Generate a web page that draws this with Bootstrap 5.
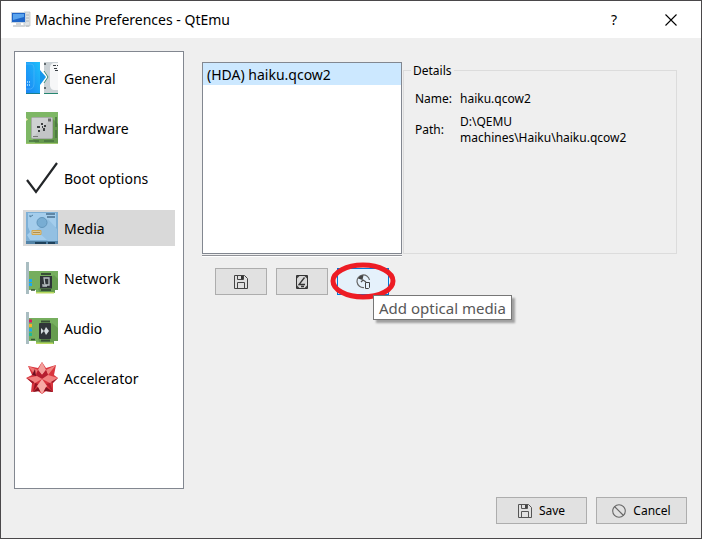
<!DOCTYPE html>
<html lang="en">
<head>
<meta charset="utf-8">
<meta name="viewport" content="width=device-width, initial-scale=1">
<title>Machine Preferences - QtEmu</title>
<link href="https://cdn.jsdelivr.net/npm/bootstrap@5.3.0/dist/css/bootstrap.min.css" rel="stylesheet">
<style>
body { font-family: "Noto Sans", sans-serif; font-size: 14px; line-height: 20px; color: #000; background: #f0f0f0; }
.dialog { border: 1px solid #4a484a; background: #efefef; }
.titlebar { height: 37px; padding-left: 10px; padding-right: 20px; }
.titlebar h1 { font-size: 14px; line-height: 20px; font-weight: 400; margin-left: 4px; }
.titlebar button { width: 20px; height: 20px; margin-left: 37px; color: #000; }
.workarea { padding: 13px 14px 0 13px; gap: 18px; }
.sidebar { width: 170px; border: 1px solid #828790; padding: 8px; gap: 14px; }
.side-item { height: 36px; padding: 0 3px; gap: 6px; color: #000; text-decoration: none; }
.side-item span { padding-top: 2px; }
.side-item.active { background: #d9d9d9; }
.content-pane { padding: 11px 10px 0 0; }
.top-row { gap: 1px; }
.media-list { width: 200px; height: 192px; border: 1px solid #828790; box-shadow: 0 1px #efefef, 0 2px #909298, 0 3px #fff; }
.media-list button { height: 22px; padding: 2px 4px 0; background: #cce8ff; color: #000; }
.small-ui, .push { font-size: 12px; line-height: 16px; }
.details { border: 1px solid #dcdcdc; margin-top: 8px; padding: 0 11px; }
.details h2 { font-size: 12px; line-height: 16px; margin: -8px 0 0 -4px; padding: 0 2px; background: #efefef; width: max-content; }
.details dl { display: grid; grid-template-columns: 38px 1fr; column-gap: 7px; row-gap: 7px; align-items: center; margin: 12px 0 0; }
.details dt { font-weight: 400; }
.media-buttons { padding: 14px 0 0 13px; gap: 9px; }
.push { height: 27px; border: 1px solid #adadad; background: #e1e1e1; color: #000; padding: 0; }
.media-buttons .push { width: 52px; }
.push.hot { border-color: #0078d7; background: #e5f1fb; }
.ring { left: -7px; top: -6px; pointer-events: none; }
.tip { left: 36px; top: 27px; z-index: 2; border: 1px solid #767676; background: #fff; color: #575757; font-size: 15px; line-height: 20px; padding: 1px 5px; white-space: nowrap; box-shadow: 3px 3px 2px #a0a0a0; }
.tip { padding: 2px 5px 1px; }
.actions { padding: 8px 14px 14px; gap: 9px; }
.actions .push { width: 91px; gap: 7px; }
svg { display: block; flex: none; }
</style>
</head>
<body>
<div class="dialog d-flex flex-column min-vh-100">
  <header class="titlebar d-flex align-items-center bg-white">
    <svg width="20" height="18" viewBox="0 0 20 18">
      <path d="M13 1h6v14h-6z" fill="#dfe3e5" stroke="#b9bec2" stroke-width=".7"/><path d="M14 4h4M14 7h4M14 10h4" stroke="#aeb4b9"/>
      <path d="M.5 1.5h14v10H.5z" fill="#1e65c8" stroke="#c6d3df"/><path d="M2 3h11v3L2 9z" fill="#5aa4ee"/>
      <path d="M5 12h5v2H5zM2 14h11l1 2H2z" fill="#d3d6d8"/><path d="M15 14h3v2h-3z" fill="#c5c9cc"/>
    </svg>
    <h1 class="mb-0 me-auto">Machine Preferences - QtEmu</h1>
    <button type="button" class="border-0 bg-transparent p-0" aria-label="Help">?</button>
    <button type="button" class="border-0 bg-transparent p-0" aria-label="Close"><svg class="mx-auto" width="12" height="12" viewBox="0 0 12 12"><path d="M.5.5l11 11M11.5.5l-11 11" stroke="#000" stroke-width="1.1"/></svg></button>
  </header>

  <main class="workarea d-flex flex-grow-1">
    <nav class="sidebar d-flex flex-column bg-white flex-shrink-0" aria-label="Preference sections">
      <a href="#general" class="side-item d-flex align-items-center">
        <svg width="32" height="32" viewBox="0 0 32 32">
          <defs><linearGradient id="blue" x1="0" x2="1" y1="1" y2="0"><stop stop-color="#1b83f4"/><stop offset="1" stop-color="#1fc0fb"/></linearGradient></defs>
          <path d="M0 0h14v32H0z" fill="url(#blue)"/><path d="M0 31h14v1H0z" fill="#167f92"/>
          <path d="M0 2h5q3 0 3 4v16q0 4-3 5H0" fill="none" stroke="#4eb6fa" stroke-width=".7"/><path d="M1.500 19v6M3.500 19v6" stroke="#91d4ff" stroke-dasharray="2 1"/>
          <path d="M18 0h14v32H18V21l4-6-4-6z" fill="#cbd2d6"/><path d="M18 31h14v1H18z" fill="#25866f"/>
          <path d="M14 8l6 7-6 8z" fill="#1596ea"/><path d="M18 9l4 6-4 6" fill="none" stroke="#3a8c79"/>
          <path d="M32 1h-4q-3 0-4 4v19q1 4 4 4h4z" fill="#f6f7f8"/><path d="M27 3.500h5M28 6.500h4M29 8.500h3" stroke="#3c4246" stroke-dasharray="3 1"/><path d="M18 2h2M18 26h2" stroke="#636c70" stroke-width="2"/>
        </svg><span>General</span></a>
      <a href="#hardware" class="side-item d-flex align-items-center">
        <svg width="32" height="32" viewBox="0 0 32 32">
          <path d="M0 0h32v32H0z" fill="#7eb765"/><path d="M6 26l20-20 6 6v20H10z" fill="#65994d"/><path d="M0 31h32v1H0z" fill="#9dc66b"/>
          <path d="M0 6l2 1.500L0 9" fill="#f4e7b0"/><path d="M30 5v10M30 18v8" stroke="#47713f" stroke-width="1.500"/><path d="M3 29h10M18 29h10" stroke="#47713f" stroke-width="1.500"/>
          <rect x="5.500" y="5.500" width="21" height="21" rx="1" fill="#c3c5c6" stroke="#a8aca8"/><path d="M6 6h20L6 26z" fill="#cfd1d2"/>
          <path d="M22 6.500h3v3h-3z" fill="#666"/><path d="M7 24.500h5" stroke="#777"/>
          <path d="M15 11h2v2h-2zM18 13h2v2h-2zM11 14h3v2h-3zM16 14h1v2h-1zM12 18h2v2h-2zM17 16h2v3h-2z" fill="#3d4042"/>
        </svg><span>Hardware</span></a>
      <a href="#boot" class="side-item d-flex align-items-center">
        <svg width="32" height="32" viewBox="0 0 32 32"><path d="M1 18l9 12L31 1" fill="none" stroke="#232629" stroke-width="2.200"/></svg><span>Boot options</span></a>
      <a href="#media" class="side-item active d-flex align-items-center" aria-current="page">
        <svg width="32" height="32" viewBox="0 0 32 32">
          <path d="M0 0h32v32H0z" fill="#7eb0d6"/><path d="M2 1h28v14l-3 2 3 4v7H4l-3-5 3-3-2-5z" fill="#a4cdec"/><path d="M16 14l6-7 9 10v12H22L10 18z" fill="#93c0e2"/>
          <circle cx="16" cy="10.500" r="5" fill="#78add3" stroke="#6296bc"/>
          <path d="M20 2h9M21 5h8" stroke="#486f8d" stroke-width="1.300"/><path d="M4 5l3-2M4 3v2" stroke="#55809e"/>
          <path d="M6 18.500h9v4H6z" fill="#d9c9a0" stroke="#d4a74c"/><path d="M7 20.500h7" stroke="#b18f4d"/>
          <path d="M0 29h32v3H0z" fill="#5384a8"/><path d="M9 30h11v2H9zM22 30h7v2h-7z" fill="#1e415b"/>
        </svg><span>Media</span></a>
      <a href="#network" class="side-item d-flex align-items-center">
        <svg width="32" height="32" viewBox="0 0 32 32">
          <path d="M3 9h29v19h-3v3H10v-3H3z" fill="#76ae5e"/><path d="M12 27l16-14 4 4v11h-3v2H14z" fill="#669c4e"/><path d="M10 30h18v1.500H10z" fill="#b9d85f"/>
          <path d="M0 0h3v32H0z" fill="#a9bdc1"/><path d="M3 17h3v3H3zM3 21h3v3H3z" fill="#1daaf0"/><path d="M5 28h4" stroke="#365536" stroke-width="1.500"/>
          <path d="M15 12h10M15 28h10" stroke="#384f36" stroke-width="2"/><rect x="14" y="14" width="12" height="12.500" fill="#2f3438"/><path d="M18 16h5v7h-4zM17 22v2h4" fill="none" stroke="#b8bfc2" stroke-width="1.300"/>
        </svg><span>Network</span></a>
      <a href="#audio" class="side-item d-flex align-items-center">
        <svg width="32" height="32" viewBox="0 0 32 32">
          <path d="M3 6h29v23h-4v3H10v-3H3z" fill="#76ae5e"/><path d="M12 27l14-16 6 5v13h-4v2H14z" fill="#669c4e"/><path d="M10 30.500h17V32H10z" fill="#b9d85f"/>
          <path d="M0 0h3v32H0z" fill="#a9bdc1"/><path d="M3 7.500h3v3H3z" fill="#d81b60"/><path d="M3 12h3v3H3z" fill="#f5b427"/><path d="M3 16.500h3v3H3z" fill="#1daaf0"/><path d="M3 21h3v3H3z" fill="#20b994"/><path d="M5 27.500h4" stroke="#365536" stroke-width="1.500"/>
          <path d="M15 9.500h9M15 28.500h9" stroke="#384f36" stroke-width="2"/><rect x="13" y="11" width="12" height="16" rx="1" fill="#2f3438"/><path d="M15 16l3 3-3 3zM18 19l2-4 3 4-3 4z" fill="#d5dcde"/>
        </svg><span>Audio</span></a>
      <a href="#accelerator" class="side-item d-flex align-items-center">
        <svg width="32" height="32" viewBox="0 0 32 32">
          <path d="M16 0l4 6 10-3-2 10 4 3-5 4 0 10-7-1-4 3-4-3-7 1 1-9-6-5 6-3-4-9 10 2z" fill="#d9353e"/>
          <path d="M16 0l4 8-4 5-4-5z" fill="#f3a09c"/><path d="M30 3l-8 10-2-5z" fill="#ef8580"/><path d="M2 4l10 4-3 5z" fill="#ee7775"/>
          <path d="M12 8l4 5 4-5 2 5-5 4-7-3z" fill="#b51f30"/><path d="M1 16l10-2 5 3-7 4z" fill="#f28280"/><path d="M32 16l-10-3-6 4 8 4z" fill="#f28280"/>
          <path d="M16 17l5 7-5 8-5-8z" fill="#f7aaa5"/><path d="M9 21l3 1-5 8z" fill="#941322"/><path d="M24 21l-4 1 7 8z" fill="#b41e2e"/>
          <path d="M7 30l5-5 2 4zM27 30l-7-5-2 4z" fill="#85111f"/><path d="M1 16l7 4-1 2zM32 16l-7 4 2 1z" fill="#9c1829"/><path d="M6 13l3-6 1 7z" fill="#701021"/>
        </svg><span>Accelerator</span></a>
    </nav>

    <section class="content-pane flex-grow-1" aria-label="Media">
      <div class="top-row d-flex">
        <div class="media-list bg-white flex-shrink-0">
          <button type="button" class="d-block w-100 border-0 text-start">(HDA) haiku.qcow2</button>
        </div>
        <section class="details small-ui flex-grow-1 mb-0">
          <h2 class="fw-normal">Details</h2>
          <dl><dt>Name:</dt><dd class="mb-0">haiku.qcow2</dd><dt>Path:</dt><dd class="mb-0">D:\QEMU<br>machines\Haiku\haiku.qcow2</dd></dl>
        </section>
      </div>
      <div class="media-buttons d-flex">
        <button type="button" class="push d-flex align-items-center justify-content-center" aria-label="Create media">
          <svg width="14" height="14" viewBox="0 0 14 14" fill="none" stroke="#444"><path d="M.5.5h10l3 3v10H.5zM3.500 13.500v-6h7v6M3.500.5v4h6v-4"/><path d="M7 1h2v3H7z" fill="#333" stroke="none"/></svg></button>
        <button type="button" class="push d-flex align-items-center justify-content-center" aria-label="Add hard disk">
          <svg width="12" height="14" viewBox="0 0 12 14"><path d="M.5.5h11v13H.5z" fill="#d8d8d8" stroke="#333"/><path d="M1 1h2.500L1 3.500zM11 1v2.500L8.500 1zM1 13v-2.500L3.500 13zM11 13v-2.500L8.500 13z" fill="#444"/><path d="M8.500 2.500L3 9.500h6M5 11.500h3" fill="none" stroke="#333" stroke-width="1.300"/></svg></button>
        <div class="position-relative">
          <button type="button" class="push hot d-flex align-items-center justify-content-center" aria-label="Add optical media" aria-describedby="optical-tip">
            <svg width="15" height="15" viewBox="0 0 15 15"><path d="M8 13.500A6.300 6.300 0 1 1 13.500 6" fill="none" stroke="#666" stroke-width="1.200"/><path d="M6.500 6L2 4.500A6 6 0 0 1 7.500 1z" fill="#444"/><path d="M5 8l2-2 3 2" fill="none" stroke="#555" stroke-width="1.300"/><path d="M9.500 8.500h4v5l-1 1h-3z" fill="#e5f1fb" stroke="#444"/></svg></button>
          <svg class="ring position-absolute" width="66" height="38" viewBox="0 0 66 38"><ellipse cx="33" cy="19" rx="30" ry="16" fill="none" stroke="#ed1c24" stroke-width="5"/></svg>
          <div class="tip position-absolute" role="tooltip" id="optical-tip">Add optical media</div>
        </div>
      </div>
    </section>
  </main>

  <footer class="actions d-flex justify-content-end">
    <button type="button" class="push d-flex align-items-center justify-content-center">
      <svg width="14" height="14" viewBox="0 0 14 14" fill="none" stroke="#555"><path d="M.5.5h10l3 3v10H.5zM3.500 13.500v-6h7v6M3.500.5v4h6v-4"/><path d="M7 1h2v3H7z" fill="#444" stroke="none"/></svg>Save</button>
    <button type="button" class="push d-flex align-items-center justify-content-center">
      <svg width="14" height="14" viewBox="0 0 14 14" fill="none" stroke="#666" stroke-width="1.100"><circle cx="7" cy="7" r="6.300"/><path d="M2.500 2.500l9 9"/></svg>Cancel</button>
  </footer>
</div>
<script src="https://cdn.jsdelivr.net/npm/bootstrap@5.3.0/dist/js/bootstrap.bundle.min.js"></script>
</body>
</html>
